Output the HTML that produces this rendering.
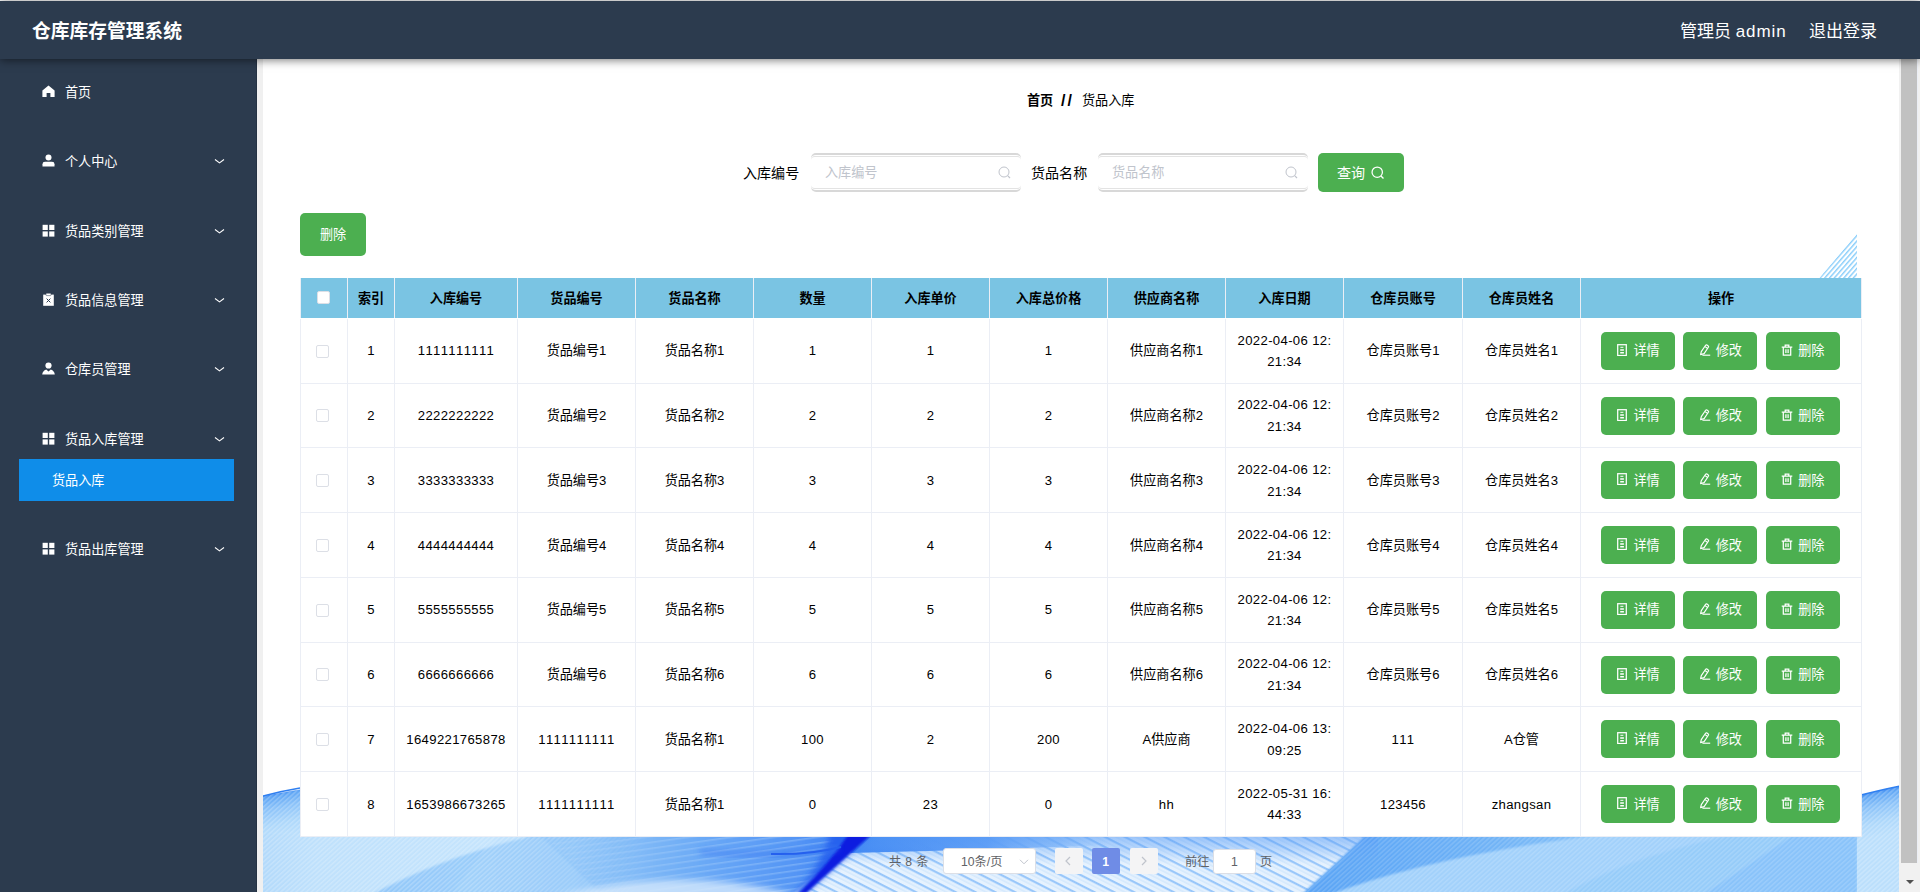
<!DOCTYPE html>
<html lang="zh-CN">
<head>
<meta charset="utf-8">
<title>仓库库存管理系统</title>
<style>
*{box-sizing:border-box;margin:0;padding:0}
html,body{width:1920px;height:892px;overflow:hidden;background:#fff}
body{position:relative;font-kerning:none;font-family:"Liberation Sans","Noto Sans CJK SC",sans-serif;font-size:13.125px;color:#000}
/* header */
#hdr{position:absolute;left:0;top:1px;width:1920px;height:58px;background:#2c3b4e;box-shadow:0 1px 9px rgba(0,0,0,.55);z-index:20}
#hdr .title{position:absolute;left:32px;top:2px;line-height:58px;font-size:18.75px;font-weight:bold;color:#fff;white-space:nowrap}
#hdr .user{position:absolute;left:1680px;top:2.3px;line-height:58px;font-size:17px;color:#fff;white-space:nowrap}
#hdr .logout{position:absolute;left:1809px;top:2.3px;line-height:58px;font-size:17px;color:#fff;white-space:nowrap}
/* sidebar */
#side{position:absolute;left:0;top:59px;width:257px;height:833px;background:#2c3b4e;z-index:10;border-right:1px solid #253243}
#gap{position:absolute;left:257px;top:59px;width:6px;height:833px;background:#f0f0f0;z-index:5}
.mi{position:absolute;left:0;width:256px;height:30px;line-height:30px;color:#fff;font-size:13.125px}
.mi .ic{position:absolute;left:42px;top:8px;width:13px;height:13px}
.mi .tx{position:absolute;left:65px;top:1px;white-space:nowrap}
.mi .ar{position:absolute;left:214px;top:11px;width:11px;height:8px}
#sub{position:absolute;left:19px;top:400px;width:215px;height:42px;background:#0f8de9;color:#fff;line-height:44px;padding-left:33px;font-size:13.125px}
/* main */
#bg{position:absolute;left:263px;top:59px;width:1636px;height:833px;background:#fff;overflow:hidden;z-index:1}
#bg svg{position:absolute;left:0;top:0}
#ct{position:absolute;left:0;top:0;width:1920px;height:892px;z-index:2}
#ct>div,#ct>span{position:absolute}
#sb{position:absolute;left:1899px;top:59px;width:21px;height:833px;background:#f1f1f1;z-index:6}
#sb .th{position:absolute;left:2px;top:0;width:17px;height:804px;background:#c1c1c1}
#sb .dn{position:absolute;left:6.5px;top:820.5px;width:0;height:0;border-left:4px solid transparent;border-right:4px solid transparent;border-top:4.5px solid #505050}
/* breadcrumb */
.bc{white-space:nowrap;line-height:20px;font-size:13.125px}
/* search */
.lbl{white-space:nowrap;line-height:20px;font-size:14.06px;color:#000}
.inp{height:39px;width:210px;border:solid #d8d8d8;border-width:2px 0;border-radius:5px;background:#fff}
.inp:before{content:'';position:absolute;left:0;right:0;top:1px;bottom:1px;border:solid #e3e3e3;border-width:1px 0;border-radius:4px}
.inp span{position:absolute;left:14px;top:0;line-height:35px;color:#c0c4cc;font-size:13.125px;white-space:nowrap}
.inp svg{position:absolute;right:10px;top:10.5px;width:13px;height:13px}
.gbtn{background:#4caf50;color:#fff;border-radius:5px;text-align:center;white-space:nowrap;font-size:13.125px}
/* table */
.thead{background:#7ac4e3;box-shadow:-1px 0 0 #ebeef5}
.th{padding-bottom:2px;display:flex;align-items:center;justify-content:center;font-weight:bold;color:#000;border-right:1px solid #ebeef5;font-size:13.125px;white-space:nowrap}
.tr{background:#fff;border-bottom:1px solid #ebeef5;box-shadow:-1px 0 0 #ebeef5}
.td{display:flex;align-items:center;justify-content:center;text-align:center;border-right:1px solid #ebeef5;line-height:21.6px;font-size:13.125px;white-space:nowrap;color:#000}
.td.num{letter-spacing:.35px}
.tdl{border-right:1px solid #ebeef5}
.cb{display:block;margin-left:-3px;width:13px;height:13px;border:1px solid #dcdfe6;border-radius:2px;background:#fff}
.cbh{display:block;margin-left:-1px;margin-top:1px;width:13px;height:13px;border:1px solid #dcdfe6;border-radius:2px;background:#fff}
.btn{width:74px;height:38px;padding-bottom:2px;background:#4caf50;border-radius:5px;color:#fff;font-size:13.125px;display:flex;align-items:center;justify-content:center;white-space:nowrap}
.btn .bi{width:12px;height:12px;margin-right:5px;flex:none}
/* pagination */
.pg{font-size:12.2px;color:#606266;white-space:nowrap;line-height:29px}
</style>
</head>
<body>
<div id="hdr">
  <div class="title">仓库库存管理系统</div>
  <div class="user">管理员 <span style="letter-spacing:.9px">admin</span></div>
  <div class="logout">退出登录</div>
</div>
<div id="side">
<div class="mi" style="top:17.9px"><svg class="ic" viewBox="0 0 13 13"><path d="M6.5 0.6 L12.6 5.6 V12 H8.4 V8 H4.6 V12 H0.4 V5.6 Z" fill="#fff"/></svg><span class="tx">首页</span></div>
<div class="mi" style="top:87.2px"><svg class="ic" viewBox="0 0 13 13"><circle cx="6.5" cy="3.6" r="3" fill="#fff"/><path d="M0.5 12.4 V10.2 Q0.5 7.8 3 7.8 H10 Q12.5 7.8 12.5 10.2 V12.4 Z" fill="#fff"/></svg><span class="tx">个人中心</span><svg class="ar" viewBox="0 0 11 8"><path d="M1 2.5 L5.5 5.9 L10 2.5" stroke="#fff" stroke-width="1.1" fill="none"/></svg></div>
<div class="mi" style="top:156.6px"><svg class="ic" viewBox="0 0 13 13"><rect x="0.6" y="0.8" width="5.2" height="5.2" fill="#fff"/><rect x="7.2" y="0.8" width="5.2" height="5.2" fill="#fff"/><rect x="0.6" y="7.4" width="5.2" height="5.2" fill="#fff"/><rect x="7.2" y="7.4" width="5.2" height="5.2" fill="#fff"/></svg><span class="tx">货品类别管理</span><svg class="ar" viewBox="0 0 11 8"><path d="M1 2.5 L5.5 5.9 L10 2.5" stroke="#fff" stroke-width="1.1" fill="none"/></svg></div>
<div class="mi" style="top:226.0px"><svg class="ic" viewBox="0 0 13 13"><path d="M1.2 1.6 H11.8 V12.8 H1.2 Z" fill="#fff"/><rect x="4" y="0.2" width="5" height="2.4" rx="0.6" fill="#fff" stroke="#2c3b4e" stroke-width="0.5"/><path d="M4.6 5.6 L8.4 9.4 M8.4 5.6 L4.6 9.4" stroke="#2c3b4e" stroke-width="1" fill="none"/></svg><span class="tx">货品信息管理</span><svg class="ar" viewBox="0 0 11 8"><path d="M1 2.5 L5.5 5.9 L10 2.5" stroke="#fff" stroke-width="1.1" fill="none"/></svg></div>
<div class="mi" style="top:295.4px"><svg class="ic" viewBox="0 0 13 13"><circle cx="6.5" cy="3.5" r="3.1" fill="#fff"/><path d="M0.2 12.6 Q0.6 8.6 4.2 7.4 L6.5 9.6 L8.8 7.4 Q12.4 8.6 12.8 12.6 Z" fill="#fff"/></svg><span class="tx">仓库员管理</span><svg class="ar" viewBox="0 0 11 8"><path d="M1 2.5 L5.5 5.9 L10 2.5" stroke="#fff" stroke-width="1.1" fill="none"/></svg></div>
<div class="mi" style="top:364.8px"><svg class="ic" viewBox="0 0 13 13"><rect x="0.6" y="0.8" width="5.2" height="5.2" fill="#fff"/><rect x="7.2" y="0.8" width="5.2" height="5.2" fill="#fff"/><rect x="0.6" y="7.4" width="5.2" height="5.2" fill="#fff"/><rect x="7.2" y="7.4" width="5.2" height="5.2" fill="#fff"/></svg><span class="tx">货品入库管理</span><svg class="ar" viewBox="0 0 11 8"><path d="M1 2.5 L5.5 5.9 L10 2.5" stroke="#fff" stroke-width="1.1" fill="none"/></svg></div>
<div class="mi" style="top:475.4px"><svg class="ic" viewBox="0 0 13 13"><rect x="0.6" y="0.8" width="5.2" height="5.2" fill="#fff"/><rect x="7.2" y="0.8" width="5.2" height="5.2" fill="#fff"/><rect x="0.6" y="7.4" width="5.2" height="5.2" fill="#fff"/><rect x="7.2" y="7.4" width="5.2" height="5.2" fill="#fff"/></svg><span class="tx">货品出库管理</span><svg class="ar" viewBox="0 0 11 8"><path d="M1 2.5 L5.5 5.9 L10 2.5" stroke="#fff" stroke-width="1.1" fill="none"/></svg></div>
<div id="sub">货品入库</div>
</div>
<div id="gap"></div>
<div id="bg"><svg width="1637" height="833" viewBox="263 59 1637 833">
<defs>
  <linearGradient id="gv" x1="0" y1="786" x2="0" y2="840" gradientUnits="userSpaceOnUse">
    <stop offset="0" stop-color="#3f8af2"/><stop offset="0.2" stop-color="#5fa6f5"/><stop offset="0.4" stop-color="#86bff8"/><stop offset="0.7" stop-color="#a9d5fb"/><stop offset="1" stop-color="#bde0fc"/>
  </linearGradient>
  <pattern id="hatchL" width="3.4" height="3.4" patternUnits="userSpaceOnUse" patternTransform="rotate(-42)"><rect width="3.4" height="1.5" fill="#fff" fill-opacity=".22"/></pattern>
  <pattern id="stripeD" width="9" height="9" patternUnits="userSpaceOnUse" patternTransform="rotate(27)"><rect width="9" height="2.2" fill="#7fb8f8" fill-opacity=".75"/><rect y="4.6" width="9" height="1" fill="#a9d1fa" fill-opacity=".5"/></pattern>
  <pattern id="curveL" width="6" height="6" patternUnits="userSpaceOnUse" patternTransform="rotate(-8)"><rect width="6" height="1.6" fill="#a8d0fb" fill-opacity=".4"/></pattern>
  <pattern id="tri" width="3.6" height="3.6" patternUnits="userSpaceOnUse" patternTransform="rotate(-49)"><rect width="3.6" height="1.45" fill="#8acefa"/></pattern>
  <linearGradient id="gA" x1="263" y1="0" x2="530" y2="0" gradientUnits="userSpaceOnUse">
    <stop offset="0" stop-color="#b3dafb"/><stop offset="0.2" stop-color="#bfe1fc"/><stop offset="1" stop-color="#c6e5fd"/>
  </linearGradient>
  <linearGradient id="gB" x1="372" y1="0" x2="850" y2="0" gradientUnits="userSpaceOnUse">
    <stop offset="0" stop-color="#93c8f9"/><stop offset="0.2" stop-color="#9acdfa"/><stop offset="0.42" stop-color="#92c7f9"/><stop offset="0.56" stop-color="#7fb9f7"/><stop offset="0.7" stop-color="#69a8f6"/><stop offset="0.88" stop-color="#5596f5"/><stop offset="1" stop-color="#3f82f3"/>
  </linearGradient>
  <linearGradient id="gT" x1="865" y1="0" x2="1110" y2="0" gradientUnits="userSpaceOnUse">
    <stop offset="0" stop-color="#3f86f3"/><stop offset="0.5" stop-color="#5c9cf6" stop-opacity=".95"/><stop offset="0.8" stop-color="#7fb6f8" stop-opacity=".6"/><stop offset="1" stop-color="#a7d1fb" stop-opacity="0"/>
  </linearGradient>
  <linearGradient id="gE" x1="1306" y1="0" x2="1857" y2="0" gradientUnits="userSpaceOnUse">
    <stop offset="0" stop-color="#5fa8f5"/><stop offset="0.2" stop-color="#74b6f7"/><stop offset="0.45" stop-color="#8dc6f9"/><stop offset="0.7" stop-color="#93caf9"/><stop offset="1" stop-color="#80bff8"/>
  </linearGradient>
  <linearGradient id="gE2" x1="1306" y1="0" x2="1640" y2="0" gradientUnits="userSpaceOnUse"><stop offset="0" stop-color="#5aa4f5"/><stop offset="0.5" stop-color="#6db1f6"/><stop offset="1" stop-color="#8cc6f9"/></linearGradient>
  <linearGradient id="gTop" x1="0" y1="0" x2="0" y2="1"><stop offset="0" stop-color="#4f95f5" stop-opacity=".6"/><stop offset="0.5" stop-color="#5c9ff6" stop-opacity=".35"/><stop offset="1" stop-color="#5c9ff6" stop-opacity="0"/></linearGradient>
  <linearGradient id="gvL" x1="280" y1="791" x2="280" y2="836" gradientUnits="userSpaceOnUse" gradientTransform="rotate(-12 280 791)">
    <stop offset="0" stop-color="#3a86f1"/><stop offset="0.1" stop-color="#62a8f5"/><stop offset="0.35" stop-color="#8cc3f9"/><stop offset="0.7" stop-color="#aed8fb"/><stop offset="1" stop-color="#bbdffc"/>
  </linearGradient>
  <linearGradient id="gvR" x1="1878" y1="790" x2="1878" y2="835" gradientUnits="userSpaceOnUse" gradientTransform="rotate(-13 1878 790)">
    <stop offset="0" stop-color="#3a86f1"/><stop offset="0.1" stop-color="#62a8f5"/><stop offset="0.35" stop-color="#8cc3f9"/><stop offset="0.7" stop-color="#aed8fb"/><stop offset="1" stop-color="#bbdffc"/>
  </linearGradient>
  <clipPath id="wb"><path d="M263 796 Q420 765 700 770 H1500 Q1760 775 1857 784 V892 H263 Z"/></clipPath>
  <clipPath id="wb2"><path d="M1857 796 Q1880 790 1900 786 V892 H1857 Z"/></clipPath>
  <linearGradient id="gm" x1="263" y1="0" x2="823" y2="0" gradientUnits="userSpaceOnUse"><stop offset="0" stop-color="#fff"/><stop offset="0.45" stop-color="#fff"/><stop offset="0.7" stop-color="#000"/></linearGradient>
  <mask id="mh" maskUnits="userSpaceOnUse" x="263" y="780" width="560" height="112"><rect x="263" y="780" width="560" height="112" fill="url(#gm)"/></mask>
  <filter id="bl" x="-30%" y="-50%" width="160%" height="200%"><feGaussianBlur stdDeviation="3"/></filter>
  <filter id="bl1" x="-10%" y="-50%" width="120%" height="200%"><feGaussianBlur stdDeviation="1"/></filter>
  <clipPath id="tile1"><rect x="263" y="59" width="1594" height="833"/></clipPath>
  <clipPath id="strip"><rect x="263" y="834" width="1594" height="58"/></clipPath>
</defs>
<g clip-path="url(#tile1)">
  <path d="M1857 233.5 V278 H1819.5 Z" fill="url(#tri)"/>
  <path d="M263 796 Q420 765 700 770 H1500 Q1760 775 1900 784 V840 H263 Z" fill="url(#gvL)"/>
  <g clip-path="url(#strip)">
    <rect x="263" y="820" width="1594" height="80" fill="url(#gA)"/>
    <g filter="url(#bl1)">
      <path d="M369 896 Q440 858 524 838 L560 822 H880 L790 896 Z" fill="url(#gB)"/>
      <path d="M453 892 L484 850 L500 836 H540 L600 892 Z" fill="#b2d9fb" fill-opacity=".3"/>
    </g>
    <path d="M540 830 H860 L800 892 H600 Z" fill="url(#curveL)"/>
    <path d="M540 900 Q680 862 800 896 Z" fill="#d4e8fd" fill-opacity=".8" filter="url(#bl)"/>
    <!-- right of streak: light striped -->
    <path d="M858 830 H1372 L1306 892 H800 Z" fill="#e6f2fe"/>
    <path d="M858 830 H1372 L1306 892 H800 Z" fill="url(#stripeD)"/>
    <path d="M864 830 H1110 V845 Q980 850 850 853 Z" fill="url(#gT)"/>
    <!-- streak soft -->
    <path d="M832 826 H880 L802 896 H792 Q824 866 832 826 Z" fill="#2862ee" filter="url(#bl)"/>
    <path d="M850 832 H874 L806 893 H799 Q829 864 850 832 Z" fill="#0a1fe0" filter="url(#bl1)"/>
    <path d="M700 852 Q790 858 838 848" fill="none" stroke="#3a78f1" stroke-width="4" filter="url(#bl)" opacity=".7"/><path d="M771 854 Q810 855 841 847" fill="none" stroke="#2560ee" stroke-width="2"/>
    <!-- region E -->
    <path d="M1372 830 H1857 V892 H1306 Z" fill="#a2d1fb"/>
    <path d="M1372 830 H1640 Q1440 852 1326 896 L1300 896 Z" fill="url(#gE2)" filter="url(#bl1)"/>
    <path d="M1700 896 L1800 830 H1857 V896 Z" fill="#86c2f9" fill-opacity=".9" filter="url(#bl1)"/>
    <path d="M1560 896 Q1640 850 1760 830 H1800 L1700 896 Z" fill="#93caf9" fill-opacity=".8" filter="url(#bl1)"/>
    <!-- blue tint over top of striped area -->
    <path d="M878 830 H1378 V864 H842 Z" fill="url(#gTop)"/>
  </g>
  <g mask="url(#mh)"><rect x="263" y="780" width="560" height="112" fill="url(#hatchL)" clip-path="url(#wb)"/></g>
  <path d="M1372 830 H1857 V892 H1306 Z" fill="url(#hatchL)" opacity=".7"/>
</g>
<g>
  <path d="M1857 796 Q1880 790 1900 786 V892 H1857 Z" fill="url(#gvR)"/>
  <rect x="1857" y="780" width="43" height="112" fill="url(#hatchL)" clip-path="url(#wb2)"/>
  <path d="M1857 796 Q1880 790 1900 786" fill="none" stroke="#2f7ff0" stroke-width="1.5"/>
</g>
<path d="M263 796 Q282 791 300 788" fill="none" stroke="#2f7ff0" stroke-width="1.5"/>
</svg>
</div>
<div id="ct">
  <div class="bc" style="left:1027px;top:91px"><b>首页</b></div>
  <div class="bc" style="left:1061px;top:91px;font-size:16px;letter-spacing:2px"><b>//</b></div>
  <div class="bc" style="left:1082px;top:91px">货品入库</div>

  <div class="lbl" style="left:743px;top:162.5px">入库编号</div>
  <div class="inp" style="left:811px;top:153px"><span>入库编号</span><svg viewBox="0 0 13 13"><circle cx="6" cy="6" r="5" fill="none" stroke="#c0c4cc" stroke-width="1"/><path d="M9.6 9.6 L12 12" stroke="#c0c4cc" stroke-width="1.2"/></svg></div>
  <div class="lbl" style="left:1031px;top:162.5px">货品名称</div>
  <div class="inp" style="left:1098px;top:153px"><span>货品名称</span><svg viewBox="0 0 13 13"><circle cx="6" cy="6" r="5" fill="none" stroke="#c0c4cc" stroke-width="1"/><path d="M9.6 9.6 L12 12" stroke="#c0c4cc" stroke-width="1.2"/></svg></div>
  <div class="gbtn" style="left:1318px;top:153px;width:86px;height:39px;line-height:41px;text-align:left;padding-left:19px;font-size:14.06px">查询<svg viewBox="0 0 13 13" style="position:absolute;left:52.5px;top:13px;width:13.5px;height:13.5px"><circle cx="6" cy="6" r="5" fill="none" stroke="#fff" stroke-width="1.2"/><path d="M9.6 9.6 L12 12" stroke="#fff" stroke-width="1.3"/></svg></div>

  <div class="gbtn" style="left:300px;top:213px;width:66px;height:43px;line-height:43px">删除</div>

<div class="thead" style="left:301px;top:278.0px;width:1561px;height:40px"></div>
<div class="th" style="left:301px;top:278.0px;width:47.0px;height:40px"><span class="cbh"></span></div>
<div class="th" style="left:348px;top:278.0px;width:47.0px;height:40px">索引</div>
<div class="th" style="left:395px;top:278.0px;width:123.0px;height:40px">入库编号</div>
<div class="th" style="left:518px;top:278.0px;width:118.0px;height:40px">货品编号</div>
<div class="th" style="left:636px;top:278.0px;width:118.0px;height:40px">货品名称</div>
<div class="th" style="left:754px;top:278.0px;width:118.0px;height:40px">数量</div>
<div class="th" style="left:872px;top:278.0px;width:118.0px;height:40px">入库单价</div>
<div class="th" style="left:990px;top:278.0px;width:118.0px;height:40px">入库总价格</div>
<div class="th" style="left:1108px;top:278.0px;width:118.0px;height:40px">供应商名称</div>
<div class="th" style="left:1226px;top:278.0px;width:118.0px;height:40px">入库日期</div>
<div class="th" style="left:1344px;top:278.0px;width:119.0px;height:40px">仓库员账号</div>
<div class="th" style="left:1463px;top:278.0px;width:118.0px;height:40px">仓库员姓名</div>
<div class="th" style="left:1581px;top:278.0px;width:281.0px;height:40px">操作</div>
<div class="tr" style="left:301px;top:318.9px;width:1561px;height:64.75px"></div>
<div class="td" style="left:301px;top:318.9px;width:47.0px;height:64.75px"><div><span class="cb"></span></div></div>
<div class="td num" style="left:348px;top:318.9px;width:47.0px;height:64.75px"><div>1</div></div>
<div class="td num" style="left:395px;top:318.9px;width:123.0px;height:64.75px"><div>1111111111</div></div>
<div class="td" style="left:518px;top:318.9px;width:118.0px;height:64.75px"><div>货品编号1</div></div>
<div class="td" style="left:636px;top:318.9px;width:118.0px;height:64.75px"><div>货品名称1</div></div>
<div class="td num" style="left:754px;top:318.9px;width:118.0px;height:64.75px"><div>1</div></div>
<div class="td num" style="left:872px;top:318.9px;width:118.0px;height:64.75px"><div>1</div></div>
<div class="td num" style="left:990px;top:318.9px;width:118.0px;height:64.75px"><div>1</div></div>
<div class="td" style="left:1108px;top:318.9px;width:118.0px;height:64.75px"><div>供应商名称1</div></div>
<div class="td num" style="left:1226px;top:318.9px;width:118.0px;height:64.75px"><div>2022-04-06 12:<br>21:34</div></div>
<div class="td" style="left:1344px;top:318.9px;width:119.0px;height:64.75px"><div>仓库员账号1</div></div>
<div class="td" style="left:1463px;top:318.9px;width:118.0px;height:64.75px"><div>仓库员姓名1</div></div>
<div class="btn" style="left:1601px;top:331.8px"><svg class="bi" viewBox="0 0 12 12"><rect x="1.7" y="0.7" width="8.6" height="10.8" fill="none" stroke="#fff" stroke-width="1.25"/><path d="M4.4 3.3 H7.4" stroke="#fff" stroke-width="1"/><path d="M4.2 6 H7.9 M4.2 8.7 H7.9" stroke="#fff" stroke-width="1.5"/></svg><span>详情</span></div>
<div class="btn" style="left:1683.3px;top:331.8px"><svg class="bi" viewBox="0 0 12 12"><path d="M1.6 10.6 L2.3 7.6 L6.6 1.3 Q7.2 0.6 8 1.1 L9.2 1.9 Q9.9 2.5 9.4 3.3 L5.1 9.6 Z M6 2.6 L8.4 4.3" fill="none" stroke="#fff" stroke-width="1.15" stroke-linejoin="round"/><path d="M3.4 11.2 H11.2" stroke="#fff" stroke-width="1.15"/></svg><span>修改</span></div>
<div class="btn" style="left:1765.8px;top:331.8px"><svg class="bi" viewBox="0 0 12 12"><path d="M0.7 3 H11.3 M4.2 2.9 V1.2 H7.8 V2.9 M2.3 3 V11.2 H9.7 V3 M4.9 5.2 V9 M7.1 5.2 V9" fill="none" stroke="#fff" stroke-width="1.25"/></svg><span>删除</span></div>
<div class="tdl" style="left:1581px;top:318.9px;width:281px;height:64.75px"></div>
<div class="tr" style="left:301px;top:383.6px;width:1561px;height:64.75px"></div>
<div class="td" style="left:301px;top:383.6px;width:47.0px;height:64.75px"><div><span class="cb"></span></div></div>
<div class="td num" style="left:348px;top:383.6px;width:47.0px;height:64.75px"><div>2</div></div>
<div class="td num" style="left:395px;top:383.6px;width:123.0px;height:64.75px"><div>2222222222</div></div>
<div class="td" style="left:518px;top:383.6px;width:118.0px;height:64.75px"><div>货品编号2</div></div>
<div class="td" style="left:636px;top:383.6px;width:118.0px;height:64.75px"><div>货品名称2</div></div>
<div class="td num" style="left:754px;top:383.6px;width:118.0px;height:64.75px"><div>2</div></div>
<div class="td num" style="left:872px;top:383.6px;width:118.0px;height:64.75px"><div>2</div></div>
<div class="td num" style="left:990px;top:383.6px;width:118.0px;height:64.75px"><div>2</div></div>
<div class="td" style="left:1108px;top:383.6px;width:118.0px;height:64.75px"><div>供应商名称2</div></div>
<div class="td num" style="left:1226px;top:383.6px;width:118.0px;height:64.75px"><div>2022-04-06 12:<br>21:34</div></div>
<div class="td" style="left:1344px;top:383.6px;width:119.0px;height:64.75px"><div>仓库员账号2</div></div>
<div class="td" style="left:1463px;top:383.6px;width:118.0px;height:64.75px"><div>仓库员姓名2</div></div>
<div class="btn" style="left:1601px;top:396.5px"><svg class="bi" viewBox="0 0 12 12"><rect x="1.7" y="0.7" width="8.6" height="10.8" fill="none" stroke="#fff" stroke-width="1.25"/><path d="M4.4 3.3 H7.4" stroke="#fff" stroke-width="1"/><path d="M4.2 6 H7.9 M4.2 8.7 H7.9" stroke="#fff" stroke-width="1.5"/></svg><span>详情</span></div>
<div class="btn" style="left:1683.3px;top:396.5px"><svg class="bi" viewBox="0 0 12 12"><path d="M1.6 10.6 L2.3 7.6 L6.6 1.3 Q7.2 0.6 8 1.1 L9.2 1.9 Q9.9 2.5 9.4 3.3 L5.1 9.6 Z M6 2.6 L8.4 4.3" fill="none" stroke="#fff" stroke-width="1.15" stroke-linejoin="round"/><path d="M3.4 11.2 H11.2" stroke="#fff" stroke-width="1.15"/></svg><span>修改</span></div>
<div class="btn" style="left:1765.8px;top:396.5px"><svg class="bi" viewBox="0 0 12 12"><path d="M0.7 3 H11.3 M4.2 2.9 V1.2 H7.8 V2.9 M2.3 3 V11.2 H9.7 V3 M4.9 5.2 V9 M7.1 5.2 V9" fill="none" stroke="#fff" stroke-width="1.25"/></svg><span>删除</span></div>
<div class="tdl" style="left:1581px;top:383.6px;width:281px;height:64.75px"></div>
<div class="tr" style="left:301px;top:448.4px;width:1561px;height:64.75px"></div>
<div class="td" style="left:301px;top:448.4px;width:47.0px;height:64.75px"><div><span class="cb"></span></div></div>
<div class="td num" style="left:348px;top:448.4px;width:47.0px;height:64.75px"><div>3</div></div>
<div class="td num" style="left:395px;top:448.4px;width:123.0px;height:64.75px"><div>3333333333</div></div>
<div class="td" style="left:518px;top:448.4px;width:118.0px;height:64.75px"><div>货品编号3</div></div>
<div class="td" style="left:636px;top:448.4px;width:118.0px;height:64.75px"><div>货品名称3</div></div>
<div class="td num" style="left:754px;top:448.4px;width:118.0px;height:64.75px"><div>3</div></div>
<div class="td num" style="left:872px;top:448.4px;width:118.0px;height:64.75px"><div>3</div></div>
<div class="td num" style="left:990px;top:448.4px;width:118.0px;height:64.75px"><div>3</div></div>
<div class="td" style="left:1108px;top:448.4px;width:118.0px;height:64.75px"><div>供应商名称3</div></div>
<div class="td num" style="left:1226px;top:448.4px;width:118.0px;height:64.75px"><div>2022-04-06 12:<br>21:34</div></div>
<div class="td" style="left:1344px;top:448.4px;width:119.0px;height:64.75px"><div>仓库员账号3</div></div>
<div class="td" style="left:1463px;top:448.4px;width:118.0px;height:64.75px"><div>仓库员姓名3</div></div>
<div class="btn" style="left:1601px;top:461.3px"><svg class="bi" viewBox="0 0 12 12"><rect x="1.7" y="0.7" width="8.6" height="10.8" fill="none" stroke="#fff" stroke-width="1.25"/><path d="M4.4 3.3 H7.4" stroke="#fff" stroke-width="1"/><path d="M4.2 6 H7.9 M4.2 8.7 H7.9" stroke="#fff" stroke-width="1.5"/></svg><span>详情</span></div>
<div class="btn" style="left:1683.3px;top:461.3px"><svg class="bi" viewBox="0 0 12 12"><path d="M1.6 10.6 L2.3 7.6 L6.6 1.3 Q7.2 0.6 8 1.1 L9.2 1.9 Q9.9 2.5 9.4 3.3 L5.1 9.6 Z M6 2.6 L8.4 4.3" fill="none" stroke="#fff" stroke-width="1.15" stroke-linejoin="round"/><path d="M3.4 11.2 H11.2" stroke="#fff" stroke-width="1.15"/></svg><span>修改</span></div>
<div class="btn" style="left:1765.8px;top:461.3px"><svg class="bi" viewBox="0 0 12 12"><path d="M0.7 3 H11.3 M4.2 2.9 V1.2 H7.8 V2.9 M2.3 3 V11.2 H9.7 V3 M4.9 5.2 V9 M7.1 5.2 V9" fill="none" stroke="#fff" stroke-width="1.25"/></svg><span>删除</span></div>
<div class="tdl" style="left:1581px;top:448.4px;width:281px;height:64.75px"></div>
<div class="tr" style="left:301px;top:513.1px;width:1561px;height:64.75px"></div>
<div class="td" style="left:301px;top:513.1px;width:47.0px;height:64.75px"><div><span class="cb"></span></div></div>
<div class="td num" style="left:348px;top:513.1px;width:47.0px;height:64.75px"><div>4</div></div>
<div class="td num" style="left:395px;top:513.1px;width:123.0px;height:64.75px"><div>4444444444</div></div>
<div class="td" style="left:518px;top:513.1px;width:118.0px;height:64.75px"><div>货品编号4</div></div>
<div class="td" style="left:636px;top:513.1px;width:118.0px;height:64.75px"><div>货品名称4</div></div>
<div class="td num" style="left:754px;top:513.1px;width:118.0px;height:64.75px"><div>4</div></div>
<div class="td num" style="left:872px;top:513.1px;width:118.0px;height:64.75px"><div>4</div></div>
<div class="td num" style="left:990px;top:513.1px;width:118.0px;height:64.75px"><div>4</div></div>
<div class="td" style="left:1108px;top:513.1px;width:118.0px;height:64.75px"><div>供应商名称4</div></div>
<div class="td num" style="left:1226px;top:513.1px;width:118.0px;height:64.75px"><div>2022-04-06 12:<br>21:34</div></div>
<div class="td" style="left:1344px;top:513.1px;width:119.0px;height:64.75px"><div>仓库员账号4</div></div>
<div class="td" style="left:1463px;top:513.1px;width:118.0px;height:64.75px"><div>仓库员姓名4</div></div>
<div class="btn" style="left:1601px;top:526.0px"><svg class="bi" viewBox="0 0 12 12"><rect x="1.7" y="0.7" width="8.6" height="10.8" fill="none" stroke="#fff" stroke-width="1.25"/><path d="M4.4 3.3 H7.4" stroke="#fff" stroke-width="1"/><path d="M4.2 6 H7.9 M4.2 8.7 H7.9" stroke="#fff" stroke-width="1.5"/></svg><span>详情</span></div>
<div class="btn" style="left:1683.3px;top:526.0px"><svg class="bi" viewBox="0 0 12 12"><path d="M1.6 10.6 L2.3 7.6 L6.6 1.3 Q7.2 0.6 8 1.1 L9.2 1.9 Q9.9 2.5 9.4 3.3 L5.1 9.6 Z M6 2.6 L8.4 4.3" fill="none" stroke="#fff" stroke-width="1.15" stroke-linejoin="round"/><path d="M3.4 11.2 H11.2" stroke="#fff" stroke-width="1.15"/></svg><span>修改</span></div>
<div class="btn" style="left:1765.8px;top:526.0px"><svg class="bi" viewBox="0 0 12 12"><path d="M0.7 3 H11.3 M4.2 2.9 V1.2 H7.8 V2.9 M2.3 3 V11.2 H9.7 V3 M4.9 5.2 V9 M7.1 5.2 V9" fill="none" stroke="#fff" stroke-width="1.25"/></svg><span>删除</span></div>
<div class="tdl" style="left:1581px;top:513.1px;width:281px;height:64.75px"></div>
<div class="tr" style="left:301px;top:577.9px;width:1561px;height:64.75px"></div>
<div class="td" style="left:301px;top:577.9px;width:47.0px;height:64.75px"><div><span class="cb"></span></div></div>
<div class="td num" style="left:348px;top:577.9px;width:47.0px;height:64.75px"><div>5</div></div>
<div class="td num" style="left:395px;top:577.9px;width:123.0px;height:64.75px"><div>5555555555</div></div>
<div class="td" style="left:518px;top:577.9px;width:118.0px;height:64.75px"><div>货品编号5</div></div>
<div class="td" style="left:636px;top:577.9px;width:118.0px;height:64.75px"><div>货品名称5</div></div>
<div class="td num" style="left:754px;top:577.9px;width:118.0px;height:64.75px"><div>5</div></div>
<div class="td num" style="left:872px;top:577.9px;width:118.0px;height:64.75px"><div>5</div></div>
<div class="td num" style="left:990px;top:577.9px;width:118.0px;height:64.75px"><div>5</div></div>
<div class="td" style="left:1108px;top:577.9px;width:118.0px;height:64.75px"><div>供应商名称5</div></div>
<div class="td num" style="left:1226px;top:577.9px;width:118.0px;height:64.75px"><div>2022-04-06 12:<br>21:34</div></div>
<div class="td" style="left:1344px;top:577.9px;width:119.0px;height:64.75px"><div>仓库员账号5</div></div>
<div class="td" style="left:1463px;top:577.9px;width:118.0px;height:64.75px"><div>仓库员姓名5</div></div>
<div class="btn" style="left:1601px;top:590.8px"><svg class="bi" viewBox="0 0 12 12"><rect x="1.7" y="0.7" width="8.6" height="10.8" fill="none" stroke="#fff" stroke-width="1.25"/><path d="M4.4 3.3 H7.4" stroke="#fff" stroke-width="1"/><path d="M4.2 6 H7.9 M4.2 8.7 H7.9" stroke="#fff" stroke-width="1.5"/></svg><span>详情</span></div>
<div class="btn" style="left:1683.3px;top:590.8px"><svg class="bi" viewBox="0 0 12 12"><path d="M1.6 10.6 L2.3 7.6 L6.6 1.3 Q7.2 0.6 8 1.1 L9.2 1.9 Q9.9 2.5 9.4 3.3 L5.1 9.6 Z M6 2.6 L8.4 4.3" fill="none" stroke="#fff" stroke-width="1.15" stroke-linejoin="round"/><path d="M3.4 11.2 H11.2" stroke="#fff" stroke-width="1.15"/></svg><span>修改</span></div>
<div class="btn" style="left:1765.8px;top:590.8px"><svg class="bi" viewBox="0 0 12 12"><path d="M0.7 3 H11.3 M4.2 2.9 V1.2 H7.8 V2.9 M2.3 3 V11.2 H9.7 V3 M4.9 5.2 V9 M7.1 5.2 V9" fill="none" stroke="#fff" stroke-width="1.25"/></svg><span>删除</span></div>
<div class="tdl" style="left:1581px;top:577.9px;width:281px;height:64.75px"></div>
<div class="tr" style="left:301px;top:642.6px;width:1561px;height:64.75px"></div>
<div class="td" style="left:301px;top:642.6px;width:47.0px;height:64.75px"><div><span class="cb"></span></div></div>
<div class="td num" style="left:348px;top:642.6px;width:47.0px;height:64.75px"><div>6</div></div>
<div class="td num" style="left:395px;top:642.6px;width:123.0px;height:64.75px"><div>6666666666</div></div>
<div class="td" style="left:518px;top:642.6px;width:118.0px;height:64.75px"><div>货品编号6</div></div>
<div class="td" style="left:636px;top:642.6px;width:118.0px;height:64.75px"><div>货品名称6</div></div>
<div class="td num" style="left:754px;top:642.6px;width:118.0px;height:64.75px"><div>6</div></div>
<div class="td num" style="left:872px;top:642.6px;width:118.0px;height:64.75px"><div>6</div></div>
<div class="td num" style="left:990px;top:642.6px;width:118.0px;height:64.75px"><div>6</div></div>
<div class="td" style="left:1108px;top:642.6px;width:118.0px;height:64.75px"><div>供应商名称6</div></div>
<div class="td num" style="left:1226px;top:642.6px;width:118.0px;height:64.75px"><div>2022-04-06 12:<br>21:34</div></div>
<div class="td" style="left:1344px;top:642.6px;width:119.0px;height:64.75px"><div>仓库员账号6</div></div>
<div class="td" style="left:1463px;top:642.6px;width:118.0px;height:64.75px"><div>仓库员姓名6</div></div>
<div class="btn" style="left:1601px;top:655.5px"><svg class="bi" viewBox="0 0 12 12"><rect x="1.7" y="0.7" width="8.6" height="10.8" fill="none" stroke="#fff" stroke-width="1.25"/><path d="M4.4 3.3 H7.4" stroke="#fff" stroke-width="1"/><path d="M4.2 6 H7.9 M4.2 8.7 H7.9" stroke="#fff" stroke-width="1.5"/></svg><span>详情</span></div>
<div class="btn" style="left:1683.3px;top:655.5px"><svg class="bi" viewBox="0 0 12 12"><path d="M1.6 10.6 L2.3 7.6 L6.6 1.3 Q7.2 0.6 8 1.1 L9.2 1.9 Q9.9 2.5 9.4 3.3 L5.1 9.6 Z M6 2.6 L8.4 4.3" fill="none" stroke="#fff" stroke-width="1.15" stroke-linejoin="round"/><path d="M3.4 11.2 H11.2" stroke="#fff" stroke-width="1.15"/></svg><span>修改</span></div>
<div class="btn" style="left:1765.8px;top:655.5px"><svg class="bi" viewBox="0 0 12 12"><path d="M0.7 3 H11.3 M4.2 2.9 V1.2 H7.8 V2.9 M2.3 3 V11.2 H9.7 V3 M4.9 5.2 V9 M7.1 5.2 V9" fill="none" stroke="#fff" stroke-width="1.25"/></svg><span>删除</span></div>
<div class="tdl" style="left:1581px;top:642.6px;width:281px;height:64.75px"></div>
<div class="tr" style="left:301px;top:707.4px;width:1561px;height:64.75px"></div>
<div class="td" style="left:301px;top:707.4px;width:47.0px;height:64.75px"><div><span class="cb"></span></div></div>
<div class="td num" style="left:348px;top:707.4px;width:47.0px;height:64.75px"><div>7</div></div>
<div class="td num" style="left:395px;top:707.4px;width:123.0px;height:64.75px"><div>1649221765878</div></div>
<div class="td num" style="left:518px;top:707.4px;width:118.0px;height:64.75px"><div>1111111111</div></div>
<div class="td" style="left:636px;top:707.4px;width:118.0px;height:64.75px"><div>货品名称1</div></div>
<div class="td num" style="left:754px;top:707.4px;width:118.0px;height:64.75px"><div>100</div></div>
<div class="td num" style="left:872px;top:707.4px;width:118.0px;height:64.75px"><div>2</div></div>
<div class="td num" style="left:990px;top:707.4px;width:118.0px;height:64.75px"><div>200</div></div>
<div class="td" style="left:1108px;top:707.4px;width:118.0px;height:64.75px"><div>A供应商</div></div>
<div class="td num" style="left:1226px;top:707.4px;width:118.0px;height:64.75px"><div>2022-04-06 13:<br>09:25</div></div>
<div class="td num" style="left:1344px;top:707.4px;width:119.0px;height:64.75px"><div>111</div></div>
<div class="td" style="left:1463px;top:707.4px;width:118.0px;height:64.75px"><div>A仓管</div></div>
<div class="btn" style="left:1601px;top:720.3px"><svg class="bi" viewBox="0 0 12 12"><rect x="1.7" y="0.7" width="8.6" height="10.8" fill="none" stroke="#fff" stroke-width="1.25"/><path d="M4.4 3.3 H7.4" stroke="#fff" stroke-width="1"/><path d="M4.2 6 H7.9 M4.2 8.7 H7.9" stroke="#fff" stroke-width="1.5"/></svg><span>详情</span></div>
<div class="btn" style="left:1683.3px;top:720.3px"><svg class="bi" viewBox="0 0 12 12"><path d="M1.6 10.6 L2.3 7.6 L6.6 1.3 Q7.2 0.6 8 1.1 L9.2 1.9 Q9.9 2.5 9.4 3.3 L5.1 9.6 Z M6 2.6 L8.4 4.3" fill="none" stroke="#fff" stroke-width="1.15" stroke-linejoin="round"/><path d="M3.4 11.2 H11.2" stroke="#fff" stroke-width="1.15"/></svg><span>修改</span></div>
<div class="btn" style="left:1765.8px;top:720.3px"><svg class="bi" viewBox="0 0 12 12"><path d="M0.7 3 H11.3 M4.2 2.9 V1.2 H7.8 V2.9 M2.3 3 V11.2 H9.7 V3 M4.9 5.2 V9 M7.1 5.2 V9" fill="none" stroke="#fff" stroke-width="1.25"/></svg><span>删除</span></div>
<div class="tdl" style="left:1581px;top:707.4px;width:281px;height:64.75px"></div>
<div class="tr" style="left:301px;top:772.1px;width:1561px;height:64.75px"></div>
<div class="td" style="left:301px;top:772.1px;width:47.0px;height:64.75px"><div><span class="cb"></span></div></div>
<div class="td num" style="left:348px;top:772.1px;width:47.0px;height:64.75px"><div>8</div></div>
<div class="td num" style="left:395px;top:772.1px;width:123.0px;height:64.75px"><div>1653986673265</div></div>
<div class="td num" style="left:518px;top:772.1px;width:118.0px;height:64.75px"><div>1111111111</div></div>
<div class="td" style="left:636px;top:772.1px;width:118.0px;height:64.75px"><div>货品名称1</div></div>
<div class="td num" style="left:754px;top:772.1px;width:118.0px;height:64.75px"><div>0</div></div>
<div class="td num" style="left:872px;top:772.1px;width:118.0px;height:64.75px"><div>23</div></div>
<div class="td num" style="left:990px;top:772.1px;width:118.0px;height:64.75px"><div>0</div></div>
<div class="td num" style="left:1108px;top:772.1px;width:118.0px;height:64.75px"><div>hh</div></div>
<div class="td num" style="left:1226px;top:772.1px;width:118.0px;height:64.75px"><div>2022-05-31 16:<br>44:33</div></div>
<div class="td num" style="left:1344px;top:772.1px;width:119.0px;height:64.75px"><div>123456</div></div>
<div class="td num" style="left:1463px;top:772.1px;width:118.0px;height:64.75px"><div>zhangsan</div></div>
<div class="btn" style="left:1601px;top:785.0px"><svg class="bi" viewBox="0 0 12 12"><rect x="1.7" y="0.7" width="8.6" height="10.8" fill="none" stroke="#fff" stroke-width="1.25"/><path d="M4.4 3.3 H7.4" stroke="#fff" stroke-width="1"/><path d="M4.2 6 H7.9 M4.2 8.7 H7.9" stroke="#fff" stroke-width="1.5"/></svg><span>详情</span></div>
<div class="btn" style="left:1683.3px;top:785.0px"><svg class="bi" viewBox="0 0 12 12"><path d="M1.6 10.6 L2.3 7.6 L6.6 1.3 Q7.2 0.6 8 1.1 L9.2 1.9 Q9.9 2.5 9.4 3.3 L5.1 9.6 Z M6 2.6 L8.4 4.3" fill="none" stroke="#fff" stroke-width="1.15" stroke-linejoin="round"/><path d="M3.4 11.2 H11.2" stroke="#fff" stroke-width="1.15"/></svg><span>修改</span></div>
<div class="btn" style="left:1765.8px;top:785.0px"><svg class="bi" viewBox="0 0 12 12"><path d="M0.7 3 H11.3 M4.2 2.9 V1.2 H7.8 V2.9 M2.3 3 V11.2 H9.7 V3 M4.9 5.2 V9 M7.1 5.2 V9" fill="none" stroke="#fff" stroke-width="1.25"/></svg><span>删除</span></div>
<div class="tdl" style="left:1581px;top:772.1px;width:281px;height:64.75px"></div>

  <div class="pg" style="left:889px;top:848px;word-spacing:.4px;letter-spacing:.2px">共 8 条</div>
  <div style="left:942.5px;top:848px;width:93px;height:26px;border:1px solid #dcdfe6;border-radius:3px;background:#fff"></div>
  <div class="pg" style="left:961px;top:848px">10条/页</div>
  <svg viewBox="0 0 10 6" style="position:absolute;left:1019px;top:859px;width:10px;height:6px"><path d="M1 0.8 L5 4.8 L9 0.8" fill="none" stroke="#c0c4cc" stroke-width="1"/></svg>
  <div style="left:1055px;top:848px;width:27.5px;height:26px;background:#f4f4f5;border-radius:2px"></div>
  <svg viewBox="0 0 6 10" style="position:absolute;left:1065px;top:856px;width:6px;height:10px"><path d="M5 1 L1 5 L5 9" fill="none" stroke="#c0c4cc" stroke-width="1.2"/></svg>
  <div style="left:1092px;top:848px;width:27.5px;height:26px;background:#6f8ce6;border-radius:2px;color:#fff;font-weight:bold;font-size:12.2px;line-height:29px;text-align:center">1</div>
  <div style="left:1130px;top:848px;width:27.5px;height:26px;background:#f4f4f5;border-radius:2px"></div>
  <svg viewBox="0 0 6 10" style="position:absolute;left:1141px;top:856px;width:6px;height:10px"><path d="M1 1 L5 5 L1 9" fill="none" stroke="#c0c4cc" stroke-width="1.2"/></svg>
  <div class="pg" style="left:1185px;top:848px">前往</div>
  <div style="left:1213px;top:849px;width:43px;height:25px;border:1px solid #dcdfe6;border-radius:3px;background:#fff;font-size:12.2px;color:#606266;line-height:24.5px;text-align:center">1</div>
  <div class="pg" style="left:1260px;top:848px">页</div>
</div>
<div id="sb"><div class="th"></div><div class="dn"></div></div>
</body>
</html>
